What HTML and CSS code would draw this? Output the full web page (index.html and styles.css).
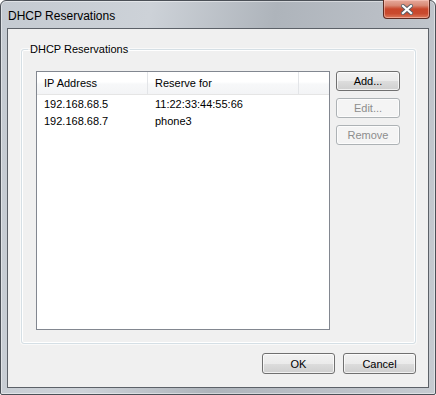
FILE: index.html
```html
<!DOCTYPE html>
<html lang="en">
<head>
    <meta charset="UTF-8">
    <title>DHCP Reservations</title>
    <link rel="stylesheet" href="styles.css">
</head>
<body>

    <div class="window">
        <div class="title-bar">
            <span class="title">DHCP Reservations</span>
            <button class="close-btn" title="Close">
                <svg width="12" height="11" viewBox="0 0 12 11">
                    <path d="M2 2 L10 9 M10 2 L2 9" stroke="#5a5f66" stroke-width="4" stroke-linecap="square"/>
                    <path d="M2 2 L10 9 M10 2 L2 9" stroke="#ffffff" stroke-width="2.2" stroke-linecap="square"/>
                </svg>
            </button>
        </div>

        <div class="client">
            <fieldset class="group">
                <legend>DHCP Reservations</legend>
                <div class="group-body">
                    <div class="list">
                        <div class="list-head">
                            <div class="col">IP Address</div>
                            <div class="col">Reserve for</div>
                            <div class="col"></div>
                        </div>
                        <div class="list-row">
                            <div class="cell">192.168.68.5</div>
                            <div class="cell">11:22:33:44:55:66</div>
                        </div>
                        <div class="list-row">
                            <div class="cell">192.168.68.7</div>
                            <div class="cell">phone3</div>
                        </div>
                    </div>
                    <div class="side-buttons">
                        <button class="btn">Add...</button>
                        <button class="btn" disabled>Edit...</button>
                        <button class="btn" disabled>Remove</button>
                    </div>
                </div>
            </fieldset>

            <div class="dialog-buttons">
                <button class="btn wide">OK</button>
                <button class="btn wide">Cancel</button>
            </div>
        </div>
    </div>

</body>
</html>
```

FILE: styles.css
```css
*{
    margin: 0;
    padding: 0;
    box-sizing: border-box;
}

body{
    font-family: "Liberation Sans", Arial, sans-serif;
    font-size: 11px;
    color: #000;
    background: #fff;
}

.window{
    width: 436px;
    height: 395px;
    border: 1px solid #4b5057;
    border-radius: 6px 6px 2px 2px;
    padding: 0 6px 6px 6px;
    background: linear-gradient(100deg, #c4cad1 0%, #cdd2d8 30%, #aeb4bb 55%, #b9bec5 75%, #c6cbd1 100%);
    box-shadow: inset 0 0 0 1px rgba(255, 255, 255, 0.45);
}

.title-bar{
    height: 27px;
    display: flex;
    justify-content: space-between;
    align-items: flex-start;
}

.title{
    font-size: 12px;
    padding: 8px 0 0 1px;
    color: #000;
}

.close-btn{
    width: 47px;
    height: 19px;
    margin-top: -1px;
    margin-right: -1px;
    border: 1px solid #5d2b22;
    border-top: none;
    border-radius: 0 0 4px 4px;
    background: linear-gradient(#e6aa9c 0%, #d98a76 30%, #c8462b 50%, #c94a2e 75%, #dc7a5c 100%);
    box-shadow: inset 0 0 0 1px rgba(255, 210, 200, 0.5);
    display: flex;
    align-items: center;
    justify-content: center;
}

.client{
    height: 360px;
    border: 1px solid #5c6168;
    background-color: #f0f0f0;
    padding: 14px 12px 0 13px;
}

.group{
    border: 1px solid #d5dfe5;
    border-radius: 3px;
    box-shadow: inset 0 0 0 1px #fff, 0 0 0 1px rgba(255, 255, 255, 0.6);
    padding: 15px 15px 12px 14px;
    height: 301px;
}

.group legend{
    padding: 0 2px;
    margin-left: -8px;
    line-height: 13px;
}

.group-body{
    display: flex;
    gap: 6px;
}

.list{
    width: 294px;
    height: 259px;
    border: 1px solid #828790;
    background-color: #fff;
}

.list-head{
    display: grid;
    grid-template-columns: 111px 151px 1fr;
    height: 23px;
    border-bottom: 1px solid #e5e5e5;
    background: linear-gradient(#ffffff 0%, #ffffff 45%, #f7f8f9 55%, #f3f4f6 100%);
}

.list-head .col{
    padding: 5px 0 0 7px;
    border-right: 1px solid #e3e5e8;
}

.list-head .col:last-child{
    border-right: none;
}

.list-row{
    display: grid;
    grid-template-columns: 111px 151px;
    height: 17px;
    line-height: 17px;
}

.list-row:nth-child(2){
    margin-top: 1px;
}

.list-row .cell{
    padding-left: 7px;
}

.side-buttons{
    display: flex;
    flex-direction: column;
    gap: 7px;
}

.btn{
    width: 64px;
    height: 20px;
    font-family: "Liberation Sans", Arial, sans-serif;
    font-size: 11px;
    color: #000;
    border: 1px solid #707070;
    border-radius: 3px;
    background: linear-gradient(#f2f2f2 0%, #ebebeb 50%, #dddddd 51%, #cfcfcf 100%);
    box-shadow: inset 0 0 0 1px rgba(255, 255, 255, 0.7);
}

.btn:disabled{
    color: #8d8d8d;
    border-color: #adb2b5;
    background: #f4f4f4;
}

.dialog-buttons{
    display: flex;
    justify-content: flex-end;
    gap: 8px;
    margin-top: 9px;
}

.btn.wide{
    width: 73px;
    height: 21px;
}
```
